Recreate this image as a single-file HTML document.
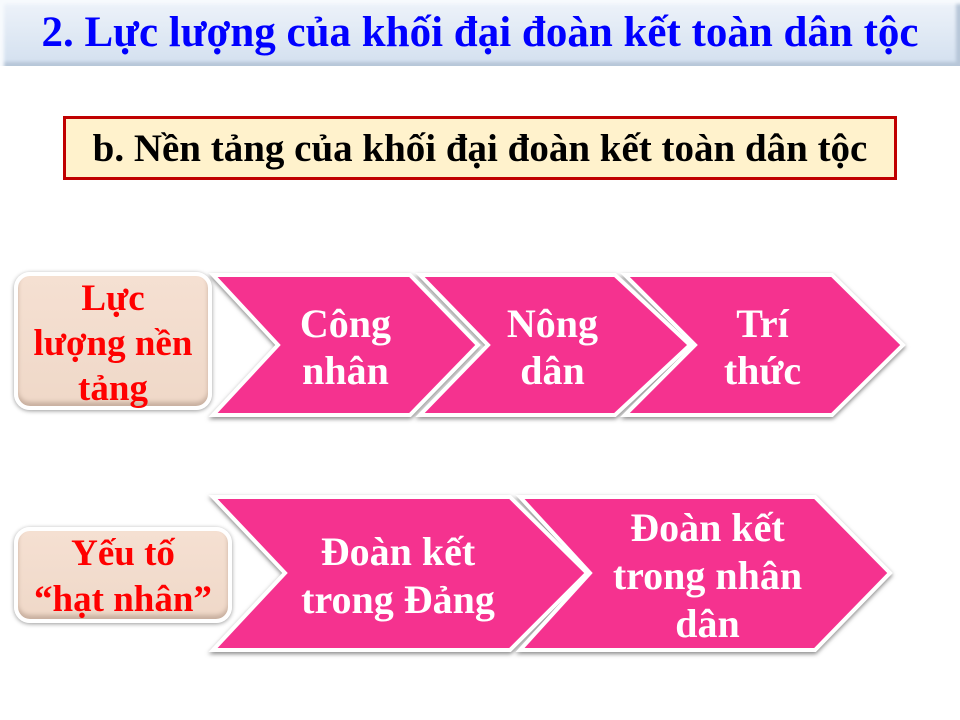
<!DOCTYPE html>
<html><head><meta charset="utf-8"><style>
body{margin:0;width:960px;height:720px;background:#fff;position:relative;overflow:hidden;font-family:"Liberation Serif",serif;font-weight:bold}
.title{position:absolute;left:0;top:0;width:960px;height:66px;background:linear-gradient(#eef3fa,#d3e0ef);box-shadow:inset 4px 4px 3px #f7fafd,inset -4px -4px 3px #b7c6d8}
.title div{position:absolute;left:0;top:8px;width:960px;text-align:center;color:#0000ff;font-size:43px;line-height:50px;white-space:nowrap}
.sub{position:absolute;left:63px;top:116px;width:828px;height:58px;border:3px solid #c00000;background:#fff2cc;text-align:center;font-size:39px;line-height:60px;color:#000;white-space:nowrap}
.lb{position:absolute;background:linear-gradient(#f5e0d2,#efd8c8);border-radius:16px;border:4px solid #fff;box-shadow:0 1px 4px #999, inset 0 -4px 4px #c8b0a0;color:#ff0000;text-align:center;font-size:37px;white-space:nowrap}
.t{position:absolute;color:#fff;text-align:center;font-size:40px;line-height:47px;white-space:nowrap}
</style></head><body>
<div class="title"><div>2. Lực lượng của khối đại đoàn kết toàn dân tộc</div></div>
<div class="sub">b. Nền tảng của khối đại đoàn kết toàn dân tộc</div>
<svg width="960" height="720" style="position:absolute;left:0;top:0">
<defs><filter id="s"><feDropShadow dx="0" dy="2" stdDeviation="2" flood-color="#888"/></filter></defs>
<g fill="#f5318f" stroke="#fff" stroke-width="4" filter="url(#s)">
<polygon points="213,275 410,275 478,345 410,415 213,415 278,345"/>
<polygon points="420,275 615,275 690,345 615,415 420,415 488,345"/>
<polygon points="625,275 832,275 903,345 832,415 625,415 695,345"/>
<polygon points="213,497 510,497 587,573 510,650 213,650 285,573"/>
<polygon points="520,497 815,497 890,573 815,650 520,650 590,573"/>
</g></svg>
<div class="lb" style="left:14px;top:272px;width:190px;height:128px;line-height:45px;padding-top:2px"><div style="margin-top:-2px">Lực<br>lượng nền<br>tảng</div></div>
<div class="lb" style="left:14px;top:527px;width:210px;height:88px;line-height:46px">Yếu tố<br>“hạt nhân”</div>
<div class="t" style="left:263px;top:300px;width:165px">Công<br>nhân</div>
<div class="t" style="left:470px;top:300px;width:165px">Nông<br>dân</div>
<div class="t" style="left:680px;top:300px;width:165px">Trí<br>thức</div>
<div class="t" style="left:283px;top:528px;width:230px;line-height:48px">Đoàn kết<br>trong Đảng</div>
<div class="t" style="left:590px;top:504px;width:235px;line-height:48px">Đoàn kết<br>trong nhân<br>dân</div>
</body></html>
